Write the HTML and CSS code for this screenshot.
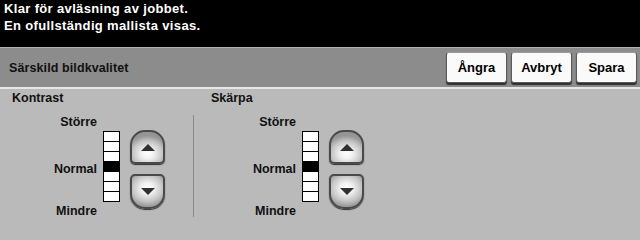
FILE: index.html
```html
<!DOCTYPE html>
<html lang="sv">
<head>
<meta charset="utf-8">
<link rel="stylesheet" href="styles.css">
</head>
<body>
<div class="status">
  <div>Klar för avläsning av jobbet.</div>
  <div>En ofullständig mallista visas.</div>
</div>
<div class="toolbar">
  <div class="title">Särskild bildkvalitet</div>
  <div class="actions">
    <button class="btn">Ångra</button>
    <button class="btn">Avbryt</button>
    <button class="btn">Spara</button>
  </div>
</div>
<div class="content">
  <div class="group first">
    <div class="group-title">Kontrast</div>
    <div class="row">
      <div class="labels">
        <div class="lbl top">Större</div>
        <div class="lbl mid">Normal</div>
        <div class="lbl bot">Mindre</div>
      </div>
      <div class="scale">
        <div class="cell"></div><div class="cell"></div><div class="cell"></div>
        <div class="cell on"></div>
        <div class="cell"></div><div class="cell"></div><div class="cell last"></div>
      </div>
      <div class="arrows">
        <div class="arrow up"><svg width="14" height="7" viewBox="0 0 14 7"><polygon points="7,0 14,7 0,7" fill="#303030"/></svg></div>
        <div class="arrow down"><svg width="14" height="7" viewBox="0 0 14 7"><polygon points="0,0 14,0 7,7" fill="#303030"/></svg></div>
      </div>
    </div>
  </div>
  <div class="divider"></div>
  <div class="group second">
    <div class="group-title">Skärpa</div>
    <div class="row">
      <div class="labels">
        <div class="lbl top">Större</div>
        <div class="lbl mid">Normal</div>
        <div class="lbl bot">Mindre</div>
      </div>
      <div class="scale">
        <div class="cell"></div><div class="cell"></div><div class="cell"></div>
        <div class="cell on"></div>
        <div class="cell"></div><div class="cell"></div><div class="cell last"></div>
      </div>
      <div class="arrows">
        <div class="arrow up"><svg width="14" height="7" viewBox="0 0 14 7"><polygon points="7,0 14,7 0,7" fill="#303030"/></svg></div>
        <div class="arrow down"><svg width="14" height="7" viewBox="0 0 14 7"><polygon points="0,0 14,0 7,7" fill="#303030"/></svg></div>
      </div>
    </div>
  </div>
</div>
</body>
</html>
```
FILE: styles.css
```css
html, body {
  margin: 0;
  padding: 0;
  width: 640px;
  height: 240px;
  overflow: hidden;
  background: #bababa;
  font-family: "Liberation Sans", Arial, sans-serif;
  font-weight: bold;
}

.status {
  background: #000;
  color: #fff;
  height: 47px;
  box-sizing: border-box;
  padding: 0 0 0 4px;
  font-size: 13px;
  line-height: 17px;
  letter-spacing: 0.35px;
}

.toolbar {
  display: flex;
  align-items: center;
  justify-content: space-between;
  height: 39px;
  background: #8c8c8c;
  border-top: 1px solid #b2b2b2;
  border-bottom: 2px solid #e6e6e6;
  padding: 0 3px 0 9px;
}

.title {
  font-size: 12.5px;
  color: #111;
  letter-spacing: 0.1px;
}

.actions {
  display: flex;
  gap: 4px;
  align-self: flex-start;
  margin-top: 4px;
}

.btn {
  width: 61px;
  height: 31px;
  background: #fafafa;
  border: 1px solid #5a5a5a;
  border-top-color: #9a9a9a;
  border-radius: 3px;
  box-shadow: 0 2px 1px #2e2e2e;
  font-family: "Liberation Sans", Arial, sans-serif;
  font-weight: bold;
  font-size: 13px;
  color: #000;
  padding: 0;
}

.content {
  display: flex;
  padding: 2px 0 0 12px;
}

.group.first {
  width: 181px;
}

.group.second {
  margin-left: 17px;
}

.group-title {
  font-size: 12.5px;
  line-height: 14px;
  color: #111;
}

.row {
  display: flex;
  margin-top: 10px;
}

.labels {
  width: 85px;
  text-align: right;
  font-size: 12.5px;
  line-height: 14px;
  color: #111;
}

.lbl.mid {
  margin-top: 33px;
}

.lbl.bot {
  margin-top: 28px;
}

.scale {
  margin-left: 6px;
  margin-top: 16px;
  width: 15px;
  border: 1px solid #000;
  border-bottom: none;
  align-self: flex-start;
}

.cell {
  height: 9px;
  background: #fff;
  border-bottom: 1px solid #000;
}

.cell.on {
  background: #000;
}

.arrows {
  margin-left: 10px;
  margin-top: 15px;
  display: flex;
  flex-direction: column;
}

.arrow {
  width: 31px;
  box-sizing: content-box;
  border: 2px solid #4a4a4a;
  display: flex;
  align-items: center;
  justify-content: center;
  box-shadow: 0 1px 1px #333;
}

.arrow.up {
  height: 30px;
  border-radius: 15px 15px 5px 5px;
  background: radial-gradient(ellipse 70% 60% at 50% 72%, #ffffff 0%, #f0f0f0 30%, #c4c4c4 70%, #959595 100%);
}

.arrow.down {
  height: 31px;
  margin-top: 10px;
  border-radius: 5px 5px 15px 15px;
  background: radial-gradient(ellipse 70% 60% at 50% 40%, #ffffff 0%, #f0f0f0 30%, #c4c4c4 70%, #959595 100%);
}

.divider {
  width: 1px;
  height: 102px;
  margin-top: 24px;
  background: #8a8a8a;
}
```
